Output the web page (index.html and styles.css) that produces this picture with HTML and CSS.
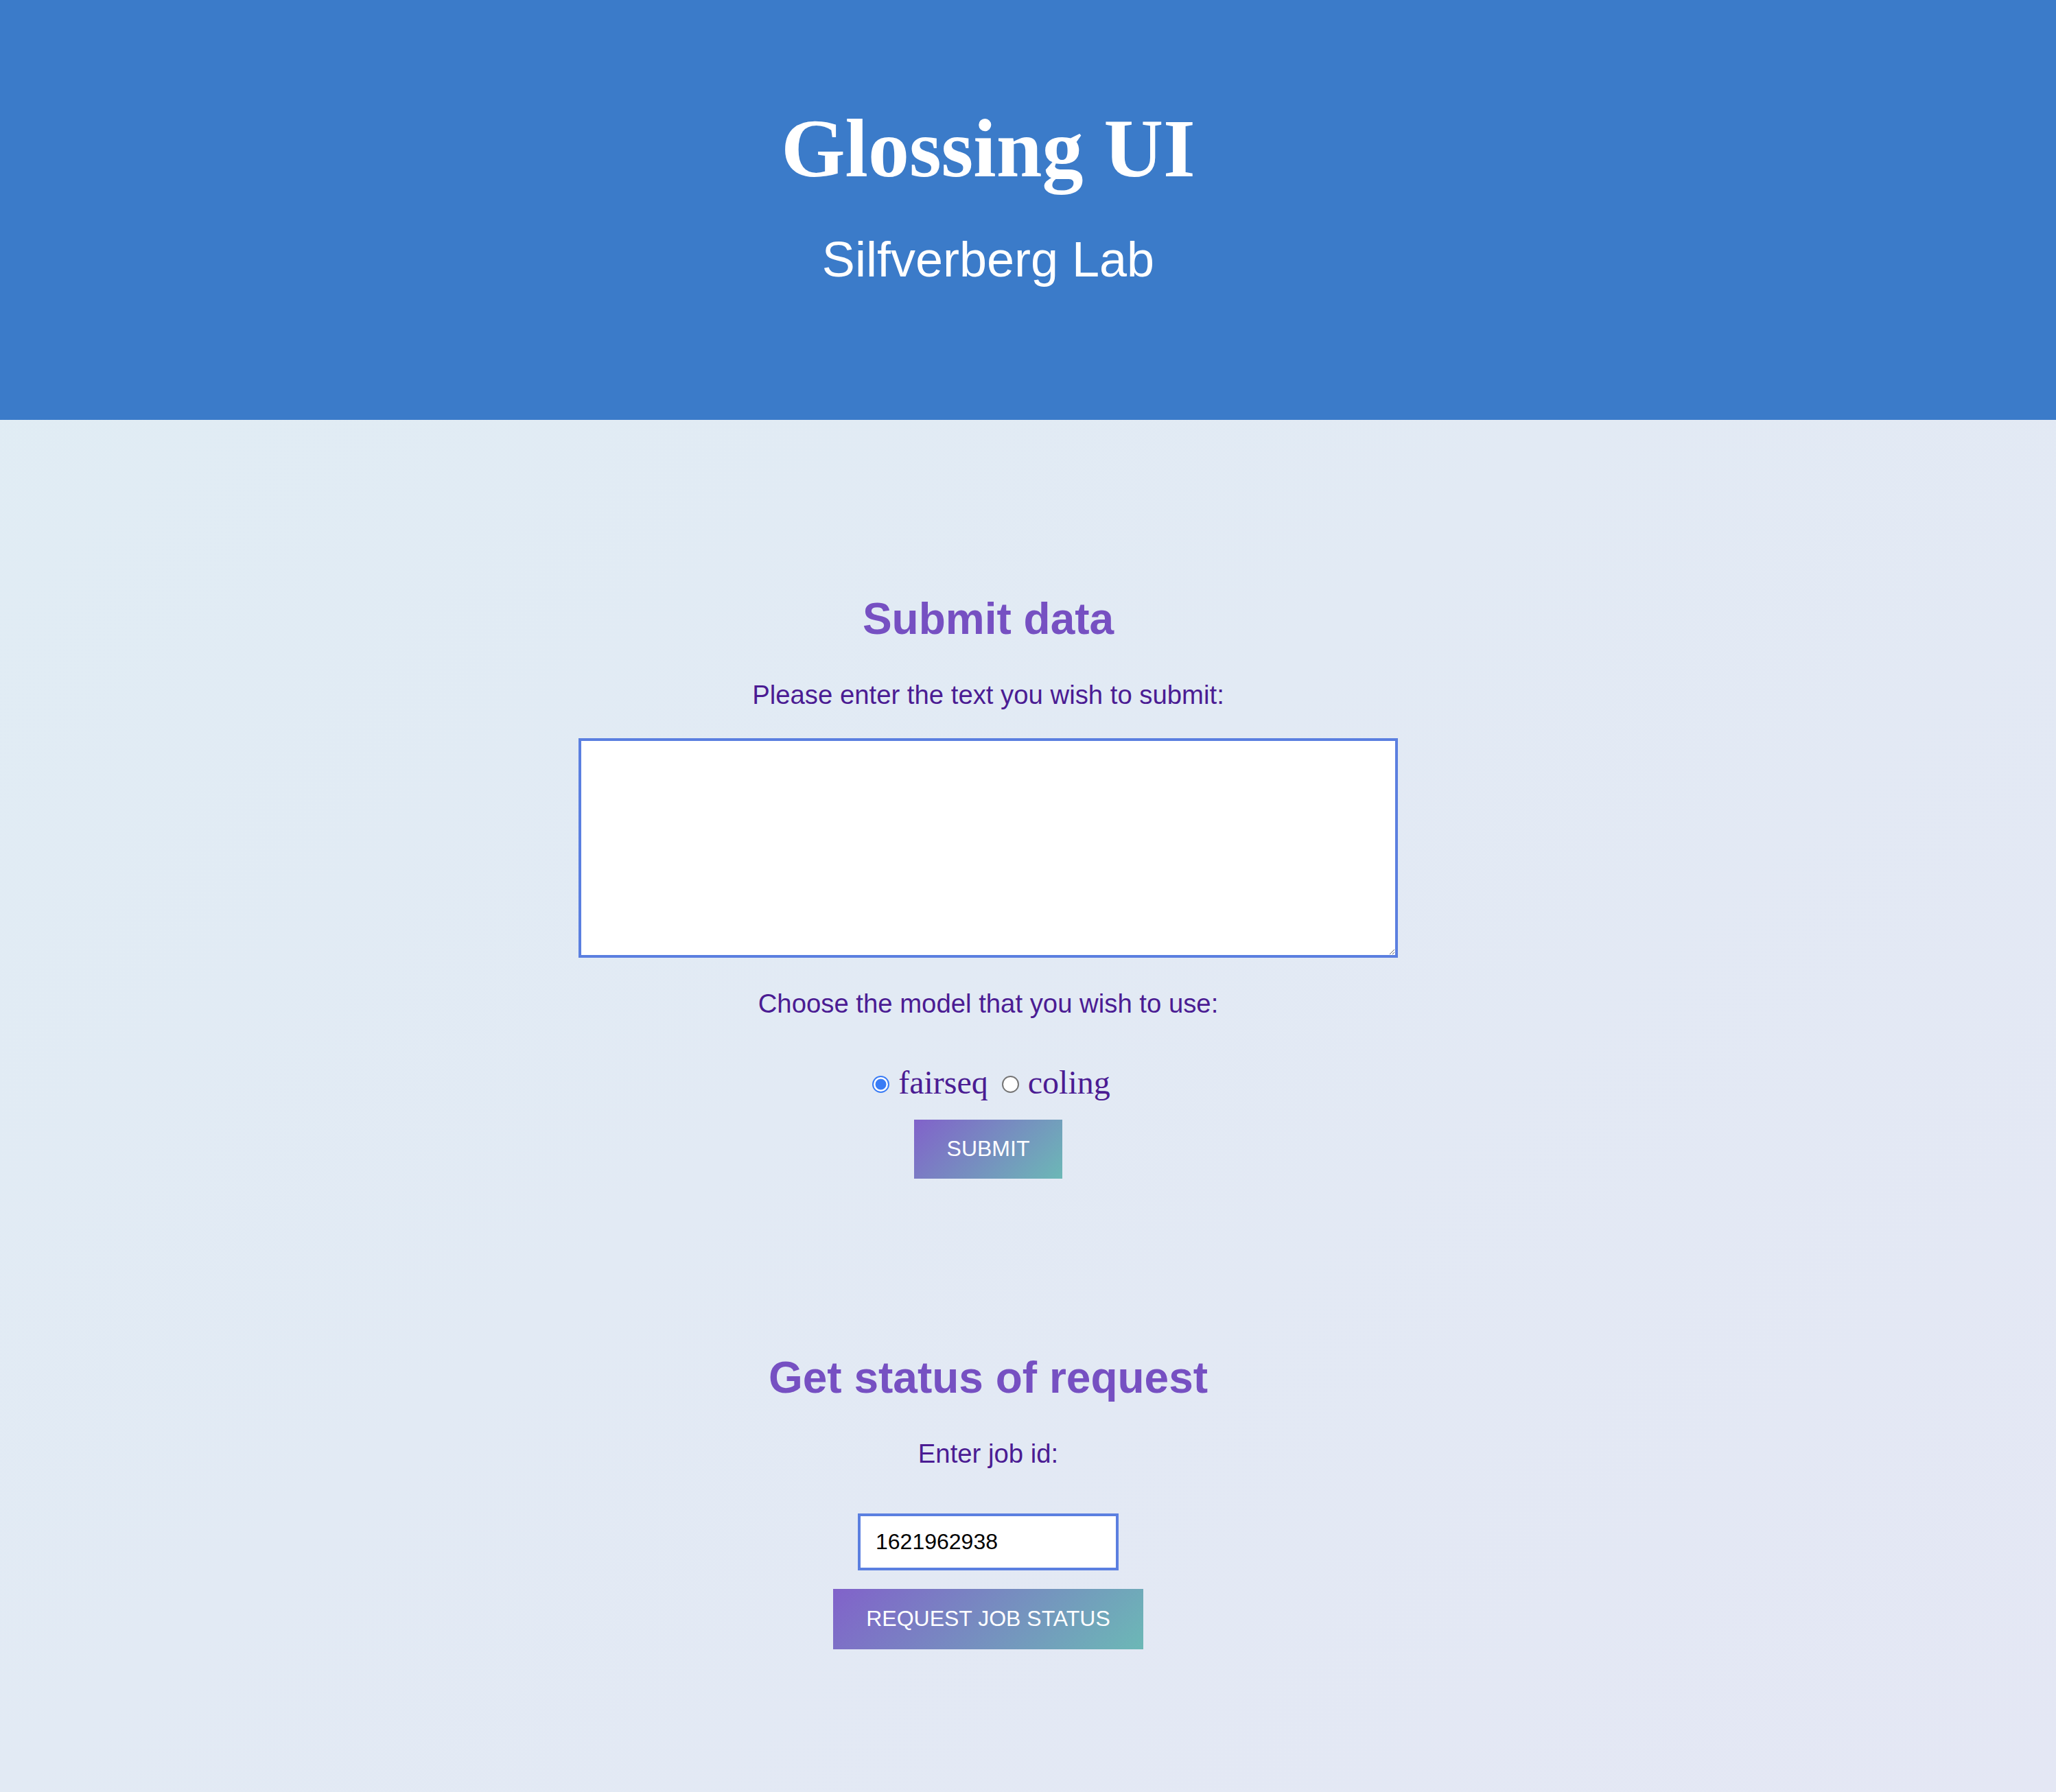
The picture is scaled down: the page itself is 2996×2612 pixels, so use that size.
FILE: index.html
```html
<!DOCTYPE html>
<html lang="en">
<head>
<meta charset="utf-8">
<title>Glossing UI</title>
<link rel="stylesheet" href="styles.css">
</head>
<body>
<header class="hero">
  <div class="hero-inner">
    <h1 class="hero-title">Glossing UI</h1>
    <p class="hero-sub">Silfverberg Lab</p>
  </div>
</header>
<main class="content">
  <section class="panel">
    <h2 class="panel-title">Submit data</h2>
    <p class="prompt">Please enter the text you wish to submit:</p>
    <textarea class="text-area"></textarea>
    <p class="prompt prompt-choose">Choose the model that you wish to use:</p>
    <div class="models"><label class="model"><input class="radio" type="radio" name="model" value="fairseq" checked><span class="model-name">fairseq</span></label><label class="model model-second"><input class="radio" type="radio" name="model" value="coling"><span class="model-name">coling</span></label></div>
    <button class="btn btn-submit" type="button">Submit</button>
  </section>
  <section class="panel panel-status">
    <h2 class="panel-title">Get status of request</h2>
    <p class="prompt">Enter job id:</p>
    <input class="job-input" type="text" value="1621962938">
    <button class="btn btn-status" type="button">Request job status</button>
  </section>
</main>
</body>
</html>
```

FILE: styles.css
```css
html, body {
  margin: 0;
  padding: 0;
}

body {
  background: linear-gradient(to bottom right, #e0edf4, #e4e7f4);
  font-family: "Liberation Sans", Arial, sans-serif;
  min-height: 2612px;
}

.hero {
  background: #3b7bc9;
  height: 612px;
  box-sizing: border-box;
  padding-top: 148px;
}

.hero-inner {
  width: 2880px;
  text-align: center;
  color: #ffffff;
}

.hero-title {
  margin: 0;
  font-family: "Liberation Serif", "Times New Roman", serif;
  font-weight: bold;
  font-size: 120px;
  line-height: 138px;
}

.hero-sub {
  margin: 51px 0 0;
  font-family: "Liberation Sans", Arial, sans-serif;
  font-size: 72px;
  line-height: 83px;
}

.content {
  width: 2880px;
  text-align: center;
  padding-bottom: 208px;
}

.panel {
  padding-top: 253px;
}

.panel-title {
  margin: 0;
  font-size: 64px;
  line-height: 74px;
  font-weight: bold;
  color: #7650c2;
}

.prompt {
  margin: 52px 0 0;
  font-size: 38.3px;
  line-height: 44px;
  color: #4b1c93;
}

.text-area {
  display: block;
  box-sizing: border-box;
  width: 1194px;
  height: 320px;
  margin: 41px auto 0;
  border: 4px solid #5b7fe0;
  background: #ffffff;
  outline: none;
  font-family: "Liberation Sans", Arial, sans-serif;
}

.prompt-choose {
  margin-top: 45px;
}

.models {
  margin-top: 65px;
  font-family: "Liberation Serif", "Times New Roman", serif;
  font-size: 48px;
  line-height: 55px;
  color: #4b1c93;
}

.model-second {
  margin-left: 11px;
}

.radio {
  -webkit-appearance: none;
  appearance: none;
  box-sizing: border-box;
  width: 25px;
  height: 25px;
  margin: 0 13px 1px 9px;
  border: 2px solid #767676;
  border-radius: 50%;
  background: #ffffff;
  vertical-align: baseline;
}

.radio:checked {
  border-color: #3a7cf5;
  background: radial-gradient(circle, #3a7cf5 0, #3a7cf5 7.5px, #ffffff 8.3px);
}

.btn {
  display: block;
  margin: 27px auto 0;
  border: none;
  color: #ffffff;
  font-family: "Liberation Sans", Arial, sans-serif;
  font-size: 32px;
  line-height: 37px;
  text-transform: uppercase;
  background: linear-gradient(135deg, #8162ca, #6cb8b6);
}

.btn-submit {
  padding: 24px 48px 25px;
}

.btn-status {
  padding: 25px 48px 26px;
}

.job-input {
  display: block;
  box-sizing: border-box;
  width: 380px;
  height: 83px;
  margin: 65px auto 0;
  padding: 0 22px;
  border: 4px solid #5b7fe0;
  background: #ffffff;
  color: #000000;
  font-family: "Liberation Sans", Arial, sans-serif;
  font-size: 32px;
  outline: none;
}
```
